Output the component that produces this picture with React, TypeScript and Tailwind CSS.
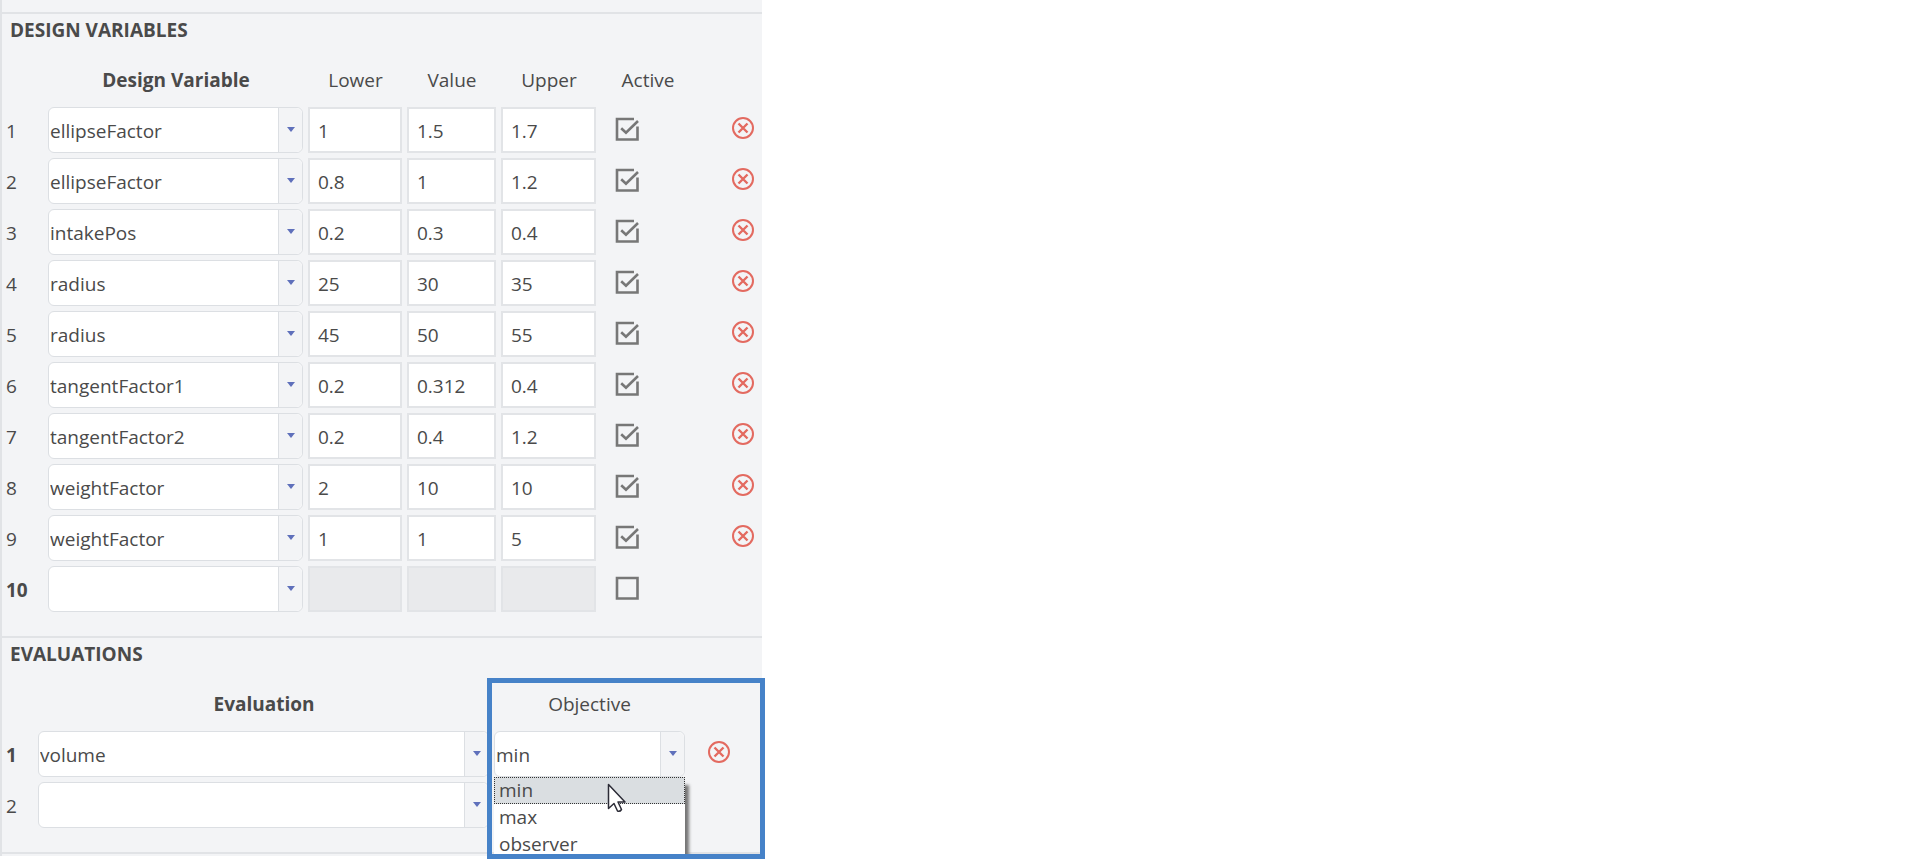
import { useState } from "react";

interface DesignVariable {
  name: string;
  lower: string;
  value: string;
  upper: string;
  active: boolean;
}

const initialVariables: DesignVariable[] = [
  { name: "ellipseFactor", lower: "1", value: "1.5", upper: "1.7", active: true },
  { name: "ellipseFactor", lower: "0.8", value: "1", upper: "1.2", active: true },
  { name: "intakePos", lower: "0.2", value: "0.3", upper: "0.4", active: true },
  { name: "radius", lower: "25", value: "30", upper: "35", active: true },
  { name: "radius", lower: "45", value: "50", upper: "55", active: true },
  { name: "tangentFactor1", lower: "0.2", value: "0.312", upper: "0.4", active: true },
  { name: "tangentFactor2", lower: "0.2", value: "0.4", upper: "1.2", active: true },
  { name: "weightFactor", lower: "2", value: "10", upper: "10", active: true },
  { name: "weightFactor", lower: "1", value: "1", upper: "5", active: true },
  { name: "", lower: "", value: "", upper: "", active: false },
];

const variableNames = [
  "",
  "ellipseFactor",
  "intakePos",
  "radius",
  "tangentFactor1",
  "tangentFactor2",
  "weightFactor",
];

const objectives = ["min", "max", "observer"];

interface ComboProps {
  label: string;
  value: string;
  options: string[];
  onChange: (value: string) => void;
}

const Combo = ({ label, value, options, onChange }: ComboProps) => (
  <div className="relative h-[46px] rounded-md border border-[#dcdfe3] bg-white">
    <div className="pointer-events-none absolute inset-y-0 right-0 flex w-6 items-center justify-center rounded-r-md border-l border-[#dcdfe3] bg-[#f3f4f6]">
      <svg width="8" height="5" viewBox="0 0 8 5" aria-hidden="true">
        <path d="M0 0h8L4 5z" fill="#5f70bb" />
      </svg>
    </div>
    <select
      aria-label={label}
      value={value}
      onChange={(e) => onChange(e.target.value)}
      className="relative block h-full w-full appearance-none bg-transparent pt-[3px] pl-px outline-none"
    >
      {options.map((option) => (
        <option key={option} value={option}>
          {option}
        </option>
      ))}
    </select>
  </div>
);

interface NumberBoxProps {
  label: string;
  value: string;
  disabled: boolean;
  onChange: (value: string) => void;
}

const NumberBox = ({ label, value, disabled, onChange }: NumberBoxProps) => (
  <input
    type="text"
    aria-label={label}
    value={value}
    disabled={disabled}
    onChange={(e) => onChange(e.target.value)}
    className="block h-[46px] w-full border-2 border-[#e2e4e7] bg-white px-2 pt-[3px] outline-none disabled:bg-[#e9eaec]"
  />
);

interface ActiveBoxProps {
  label: string;
  checked: boolean;
  onChange: (checked: boolean) => void;
}

const ActiveBox = ({ label, checked, onChange }: ActiveBoxProps) => (
  <label className="relative block h-6 w-6 cursor-pointer">
    <input
      type="checkbox"
      aria-label={label}
      checked={checked}
      onChange={(e) => onChange(e.target.checked)}
      className="absolute inset-0 h-6 w-6 appearance-none"
    />
    <svg
      className="pointer-events-none relative"
      width="24"
      height="24"
      viewBox="0 0 24 24"
      fill="none"
      stroke="#777"
      strokeWidth="2.6"
      aria-hidden="true"
    >
      {checked ? (
        <>
          <path d="M19 2H2v20.500h20.500V9.500" />
          <path d="M6.200 11.200l4.800 4.600L23 4" />
        </>
      ) : (
        <path d="M2 2h20.500v20.500H2z" />
      )}
    </svg>
  </label>
);

const DeleteButton = ({ label, onClick }: { label: string; onClick: () => void }) => (
  <button type="button" aria-label={label} onClick={onClick} className="block cursor-pointer">
    <svg
      width="22"
      height="22"
      viewBox="0 0 22 22"
      fill="none"
      stroke="#e36a60"
      strokeWidth="2"
      aria-hidden="true"
    >
      <circle cx="11" cy="11" r="10" />
      <path d="M6.500 6.500l9 9M15.500 6.500l-9 9" strokeWidth="2.400" />
    </svg>
  </button>
);

const DesignVariables = () => {
  const [variables, setVariables] = useState(initialVariables);

  const update = (index: number, change: Partial<DesignVariable>) => {
    setVariables(variables.map((v, i) => (i === index ? { ...v, ...change } : v)));
  };

  const remove = (index: number) => {
    setVariables(variables.filter((_, i) => i !== index));
  };

  return (
    <section className="border-t-2 border-[#e1e3e6] pb-[22px]">
      <h2 className="px-2 pt-0.5 leading-7 font-bold">DESIGN VARIABLES</h2>
      <table className="mt-3 w-full table-fixed">
        <colgroup>
          <col className="w-[46px]" />
          <col className="w-[260px]" />
          <col className="w-[99px]" />
          <col className="w-[94px]" />
          <col className="w-[100px]" />
          <col className="w-[94px]" />
          <col />
        </colgroup>
        <thead>
          <tr className="h-12">
            <td />
            <th className="pr-1 font-bold">Design Variable</th>
            <th className="pr-1 font-normal">Lower</th>
            <th className="pr-1 font-normal">Value</th>
            <th className="pr-1 font-normal">Upper</th>
            <th className="font-normal">Active</th>
            <td />
          </tr>
        </thead>
        <tbody>
          {variables.map((variable, i) => {
            const blank = variable.name === "";
            return (
              <tr key={i} className="h-[51px]">
                <th className={`pt-[3px] pl-1 text-left ${blank ? "font-bold" : "font-normal"}`}>
                  {i + 1}
                </th>
                <td className="pr-[5px]">
                  <Combo
                    label={`Design variable ${i + 1}`}
                    value={variable.name}
                    options={variableNames}
                    onChange={(name) => update(i, { name })}
                  />
                </td>
                <td className="pr-[5px]">
                  <NumberBox
                    label={`Lower ${i + 1}`}
                    value={variable.lower}
                    disabled={blank}
                    onChange={(lower) => update(i, { lower })}
                  />
                </td>
                <td className="pr-[5px]">
                  <NumberBox
                    label={`Value ${i + 1}`}
                    value={variable.value}
                    disabled={blank}
                    onChange={(value) => update(i, { value })}
                  />
                </td>
                <td className="pr-[5px]">
                  <NumberBox
                    label={`Upper ${i + 1}`}
                    value={variable.upper}
                    disabled={blank}
                    onChange={(upper) => update(i, { upper })}
                  />
                </td>
                <td className="pb-0.5 pl-3.5">
                  <ActiveBox
                    label={`Active ${i + 1}`}
                    checked={variable.active}
                    onChange={(active) => update(i, { active })}
                  />
                </td>
                <td className="pb-1 pl-[37px]">
                  {!blank && (
                    <DeleteButton label={`Remove variable ${i + 1}`} onClick={() => remove(i)} />
                  )}
                </td>
              </tr>
            );
          })}
        </tbody>
      </table>
    </section>
  );
};

const Pointer = () => (
  <svg
    className="pointer-events-none absolute top-1.5 left-[113px]"
    width="19"
    height="30"
    viewBox="0 0 19 30"
    aria-hidden="true"
  >
    <path
      d="M1.500 1.500v24l5.500-5 3.500 7.500q2.500 1 4-1.500l-3.500-7.500h7z"
      fill="#fff"
      stroke="#2b2b36"
      strokeWidth="1.500"
      strokeLinejoin="round"
    />
  </svg>
);

const Evaluations = () => {
  const [evaluations, setEvaluations] = useState(["volume", ""]);
  const [objective, setObjective] = useState("min");

  const update = (index: number, name: string) => {
    setEvaluations(evaluations.map((v, i) => (i === index ? name : v)));
  };

  return (
    <section className="relative border-t-2 border-[#e1e3e6] pb-[22px]">
      <h2 className="px-2 pt-0.5 leading-7 font-bold">EVALUATIONS</h2>
      <table className="mt-3 w-full table-fixed">
        <colgroup>
          <col className="w-9" />
          <col className="w-[456px]" />
          <col className="w-[191px]" />
          <col />
        </colgroup>
        <thead>
          <tr className="h-12">
            <td />
            <th className="pr-1 font-bold">Evaluation</th>
            <th className="font-normal">Objective</th>
            <td />
          </tr>
        </thead>
        <tbody>
          {evaluations.map((evaluation, i) => (
            <tr key={i} className="h-[51px]">
              <th className={`pt-[3px] pl-1 text-left ${evaluation ? "font-bold" : "font-normal"}`}>
                {i + 1}
              </th>
              <td className="pr-[5px]">
                <Combo
                  label={`Evaluation ${i + 1}`}
                  value={evaluation}
                  options={["", "volume"]}
                  onChange={(name) => update(i, name)}
                />
              </td>
              <td>
                {evaluation && (
                  <div className="relative">
                    <Combo
                      label={`Objective ${i + 1}`}
                      value={objective}
                      options={objectives}
                      onChange={setObjective}
                    />
                    {/* open list of the objective combo */}
                    <div className="absolute top-full left-0 w-full">
                      <div className="h-[81px] w-[200px] overflow-hidden">
                        <ul
                          role="listbox"
                          aria-label="Objective"
                          className="w-[191px] bg-white shadow-[4px_8px_3px_0_#777]"
                        >
                          {objectives.map((option) => (
                            <li
                              key={option}
                              role="option"
                              aria-selected={option === objective}
                              onClick={() => setObjective(option)}
                              className={`h-[27px] border px-1 leading-6 ${
                                option === objective
                                  ? "border-dotted border-[#333] bg-[#dadee1]"
                                  : "border-transparent"
                              }`}
                            >
                              {option}
                            </li>
                          ))}
                        </ul>
                      </div>
                      <Pointer />
                    </div>
                  </div>
                )}
              </td>
              <td className="pb-1 pl-[23px]">
                {evaluation && (
                  <DeleteButton
                    label={`Remove evaluation ${i + 1}`}
                    onClick={() => update(i, "")}
                  />
                )}
              </td>
            </tr>
          ))}
        </tbody>
      </table>
      {/* highlight around the objective column */}
      <div className="pointer-events-none absolute top-10 -right-[3px] -bottom-[7px] w-[278px] border-5 border-[#4682c8]" />
    </section>
  );
};

export default function App() {
  return (
    <main className="min-h-screen bg-white font-['Open_Sans',sans-serif] text-[19px] leading-6 text-[#4a4a4a]">
      <div className="max-w-[762px] border-l-2 border-[#e1e3e6] bg-[#f3f4f6] pt-3">
        <DesignVariables />
        <Evaluations />
        <div className="h-1 border-t-2 border-[#e1e3e6]" />
      </div>
    </main>
  );
}
